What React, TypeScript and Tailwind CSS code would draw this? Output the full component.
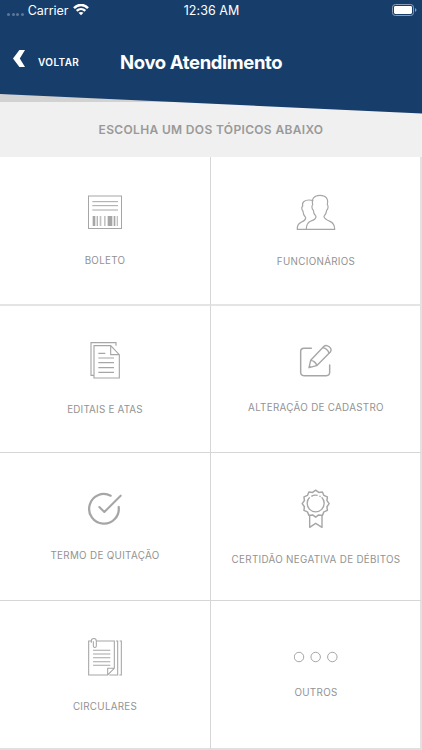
import React from "react";

type Topic = {
  label: string;
  viewBox: string;
  cell: string;
  caption: string;
  icon: React.ReactNode;
};

// Scalloped outline of the rosette: twelve points joined by shallow notches.
const rosette = Array.from({ length: 24 }, (_, i) => {
  const a = (i * Math.PI) / 12 - Math.PI / 2;
  const r = i % 2 === 0 ? 40.5 : 35;
  return `${(272 + r * Math.cos(a)).toFixed(1)},${(86 + r * Math.sin(a)).toFixed(1)}`;
}).join(" ");

const topics: Topic[] = [
  {
    label: "BOLETO",
    viewBox: "69 33 132 132",
    cell: "h-[149px] border-r border-b-2 border-b-[#e4e4e4] pt-[34px]",
    caption: "mt-[17px] tracking-[0.31px]",
    icon: (
      <>
        <rect x="85.5" y="48" width="99" height="97.5" strokeWidth="3" />
        <path d="M97 65H174M97 77H174M97 90H174" strokeWidth="3" />
        <g fill="#a6a6a6" stroke="none">
          <rect x="98" y="108" width="8" height="30" />
          <rect x="110" y="108" width="3.5" height="30" />
          <rect x="119" y="108" width="5" height="30" opacity=".7" />
          <rect x="132" y="108" width="5" height="30" opacity=".65" />
          <rect x="143" y="108" width="14" height="30" />
          <rect x="161" y="108" width="5" height="30" />
          <rect x="170" y="108" width="4" height="30" opacity=".7" />
        </g>
      </>
    ),
  },
  {
    label: "FUNCIONÁRIOS",
    viewBox: "84 33 132 132",
    cell: "h-[149px] border-r-2 border-b-2 border-r-[#e2e2e2] border-b-[#e4e4e4] pl-px pt-[34px]",
    caption: "mt-[18px] tracking-[0.31px]",
    icon: (
      <>
        <path d="M122 148H94C93 136 96 131 105 127C115 122 119 120 119 113C113 106 111 101 111 94C107 88 106 82 110 79C107 65 117 60 129 60C135 60 139 61 142 63" strokeWidth="3.6" />
        <path d="M121 148C121 136 123 129 133 124C145 119 150 117 150 109C145 104 142 97 142 91C138 88 136 78 140 74C136 55 145 46 162 46C179 46 188 55 184 74C188 78 186 88 182 91C181 99 178 105 174 109C174 117 181 120 192 124C204 129 206 136 206 148Z" strokeWidth="3.6" />
      </>
    ),
  },
  {
    label: "EDITAIS E ATAS",
    viewBox: "69 42 132 132",
    cell: "h-[147px] border-r border-b pt-[33px]",
    caption: "mt-[18px] tracking-[0.22px]",
    icon: (
      <>
        <path d="M102 151H93V53H168V62" strokeWidth="3.4" />
        <path d="M102 62H152L178 89V159H102ZM152 62V89H178" strokeWidth="3.4" />
        <path d="M115 85H136M115 99H162M115 113H162M115 128H162M115 142H162" strokeWidth="3.4" />
      </>
    ),
  },
  {
    label: "ALTERAÇÃO DE CADASTRO",
    viewBox: "162 42 132 132",
    cell: "h-[147px] border-r-2 border-b border-r-[#e2e2e2] pl-px pt-[33px]",
    caption: "mt-[16px] tracking-[0.31px]",
    icon: (
      <>
        <path d="M214 70H192Q182 70 182 80V142Q182 152 192 152H259Q269 152 269 142V120" strokeWidth="4.4" strokeLinecap="round" />
        <path d="M207 128L212 106L252 64C260 56 279 70 271 81L230 122ZM212 106C219 106 229 113 230 122M248 68C256 68 266 77 267 85" strokeWidth="4.2" strokeLinejoin="round" />
        <path d="M207 128L208 121L214 126Z" fill="#a6a6a6" stroke="none" />
      </>
    ),
  },
  {
    label: "TERMO DE QUITAÇÃO",
    viewBox: "114 36 132 132",
    cell: "h-[148px] border-r border-b pt-[34px]",
    caption: "mt-[16px] tracking-[0.33px]",
    icon: (
      <>
        <path d="M197 62A44.5 44.5 0 1 0 221 96" strokeWidth="6.8" strokeLinecap="round" />
        <path d="M163 96L178 111L227 62" strokeWidth="6.2" strokeLinecap="round" strokeLinejoin="round" />
      </>
    ),
  },
  {
    label: "CERTIDÃO NEGATIVA DE DÉBITOS",
    viewBox: "207 36 132 132",
    cell: "h-[148px] border-r-2 border-b border-r-[#e2e2e2] pl-px pt-[34px]",
    caption: "mt-[20px] tracking-[0.31px]",
    icon: (
      <>
        <polygon points={rosette} strokeWidth="4.4" strokeLinejoin="round" />
        <path d="M254 67A25.5 25.5 0 1 0 290 67M259 64A25.5 25.5 0 0 1 278 61M283 63L287 65" strokeWidth="4" />
        <path d="M254 119V157L272 145L291 157V119" strokeWidth="4.2" strokeLinejoin="round" />
      </>
    ),
  },
  {
    label: "CIRCULARES",
    viewBox: "69 30 132 132",
    cell: "h-[149px] border-r border-b-2 border-b-[#e0e0e0] pt-[34px]",
    caption: "mt-[19px] tracking-[0.29px]",
    icon: (
      <>
        <path d="M94 48H86V150H143L163 130V48H109M143 150V130H163" strokeWidth="3.2" />
        <path d="M168 48H173V150H148M179 48H184V150H178" strokeWidth="3.2" />
        <path d="M99 76H151M99 87H151M99 98H151M99 110H151M99 121H151" strokeWidth="3.2" />
        <path d="M94 53V48C94 38 109 38 109 48V62C109 69 100 69 100 62V49" strokeWidth="3.2" />
      </>
    ),
  },
  {
    label: "OUTROS",
    viewBox: "84 30 132 132",
    cell: "h-[149px] border-r-2 border-b-2 border-r-[#e2e2e2] border-b-[#e0e0e0] pl-px pt-[34px]",
    caption: "mt-[5px] tracking-[0.34px]",
    icon: (
      <>
        <circle cx="99" cy="96" r="14.2" strokeWidth="3" />
        <circle cx="149" cy="96" r="14.2" strokeWidth="3" />
        <circle cx="199" cy="96" r="14.2" strokeWidth="3" />
      </>
    ),
  },
];

function StatusBar() {
  return (
    <div className="flex h-[21px] items-center text-[12.5px] leading-[21px] text-white">
      <div className="flex flex-1 items-center pl-[7px]">
        <div className="mt-[7px] flex gap-[1.6px]">
          <i className="size-[3px] rounded-full bg-[#5c7797]" />
          <i className="size-[3px] rounded-full bg-[#5c7797]" />
          <i className="size-[3px] rounded-full bg-[#5c7797]" />
          <i className="size-[3px] rounded-full bg-[#5c7797]" />
        </div>
        <span className="ml-[4px] tracking-[-0.05px]">Carrier</span>
        <svg className="-mt-px ml-[5px]" width="16" height="12" viewBox="0 0 16 12" fill="none" stroke="#fff">
          <path d="M1 4.1C5-.1 11-.1 15 4.1" strokeWidth="2.5" />
          <path d="M3.7 6.9C6.2 4.4 9.8 4.4 12.3 6.9" strokeWidth="2.3" />
          <path d="M8 11.3L5.5 8.8C6.9 7.6 9.1 7.6 10.5 8.8Z" fill="#fff" stroke="none" />
        </svg>
      </div>
      <span className="-ml-px tracking-[0.05px]">12:36 AM</span>
      <div className="flex flex-1 justify-end pr-[5px]">
        <svg className="-mt-px" width="25" height="12" viewBox="0 0 25 12">
          <rect x=".5" y=".5" width="21" height="11" rx="2.8" fill="none" stroke="#8b9db5" />
          <rect x="2" y="2" width="18" height="8" rx="1.4" fill="#fff" />
          <path d="M23 4V8C25 7 25 5 23 4Z" fill="#8b9db5" />
        </svg>
      </div>
    </div>
  );
}

export default function App() {
  return (
    <div className="h-[750px] w-[422px] overflow-hidden bg-white font-['Inter','Liberation_Sans',sans-serif]">
      <header className="h-[157px] bg-[#f0f0f0]">
        <div className="h-[102px] bg-[#d2d2d2]">
          <div className="h-[114px] bg-[#f0f0f0] [clip-path:polygon(0_102px,100%_102px,100%_100%,0_100%)]" />
          <div className="-mt-[114px] h-[114px] bg-[#173d6a] [clip-path:polygon(0_0,100%_0,100%_113.5px,0_94px)]">
            <StatusBar />
            <div className="flex h-[82px] items-center">
              <button className="flex w-[120px] items-center pl-[13px] text-white">
                <svg className="-mt-[7px]" width="13" height="17" viewBox="0 0 13 17" fill="#fff">
                  <path d="M6.4 0H12L6.8 8.5L12 17H6.4L0 8.5Z" />
                </svg>
                <span className="ml-[12px] text-[10px] font-semibold leading-4 tracking-[0.4px]">VOLTAR</span>
              </button>
              <h1 className="-mt-px whitespace-nowrap text-[18.5px] font-bold leading-6 tracking-[-0.36px] text-white">
                Novo Atendimento
              </h1>
            </div>
          </div>
        </div>
        <p className="pt-[20px] text-center text-[12px] font-semibold leading-4 tracking-[0.34px] text-[#999]">
          ESCOLHA UM DOS TÓPICOS ABAIXO
        </p>
      </header>
      <main className="grid grid-cols-2">
        {topics.map((t) => (
          <button
            key={t.label}
            className={`flex flex-col items-center border-[#d6d6d6] bg-white ${t.cell}`}
          >
            <svg className="shrink-0" width="44" height="44" viewBox={t.viewBox} fill="none" stroke="#a6a6a6">
              {t.icon}
            </svg>
            <span className={`whitespace-nowrap text-[9.8px] leading-[18px] text-[#929292] ${t.caption}`}>{t.label}</span>
          </button>
        ))}
      </main>
    </div>
  );
}
